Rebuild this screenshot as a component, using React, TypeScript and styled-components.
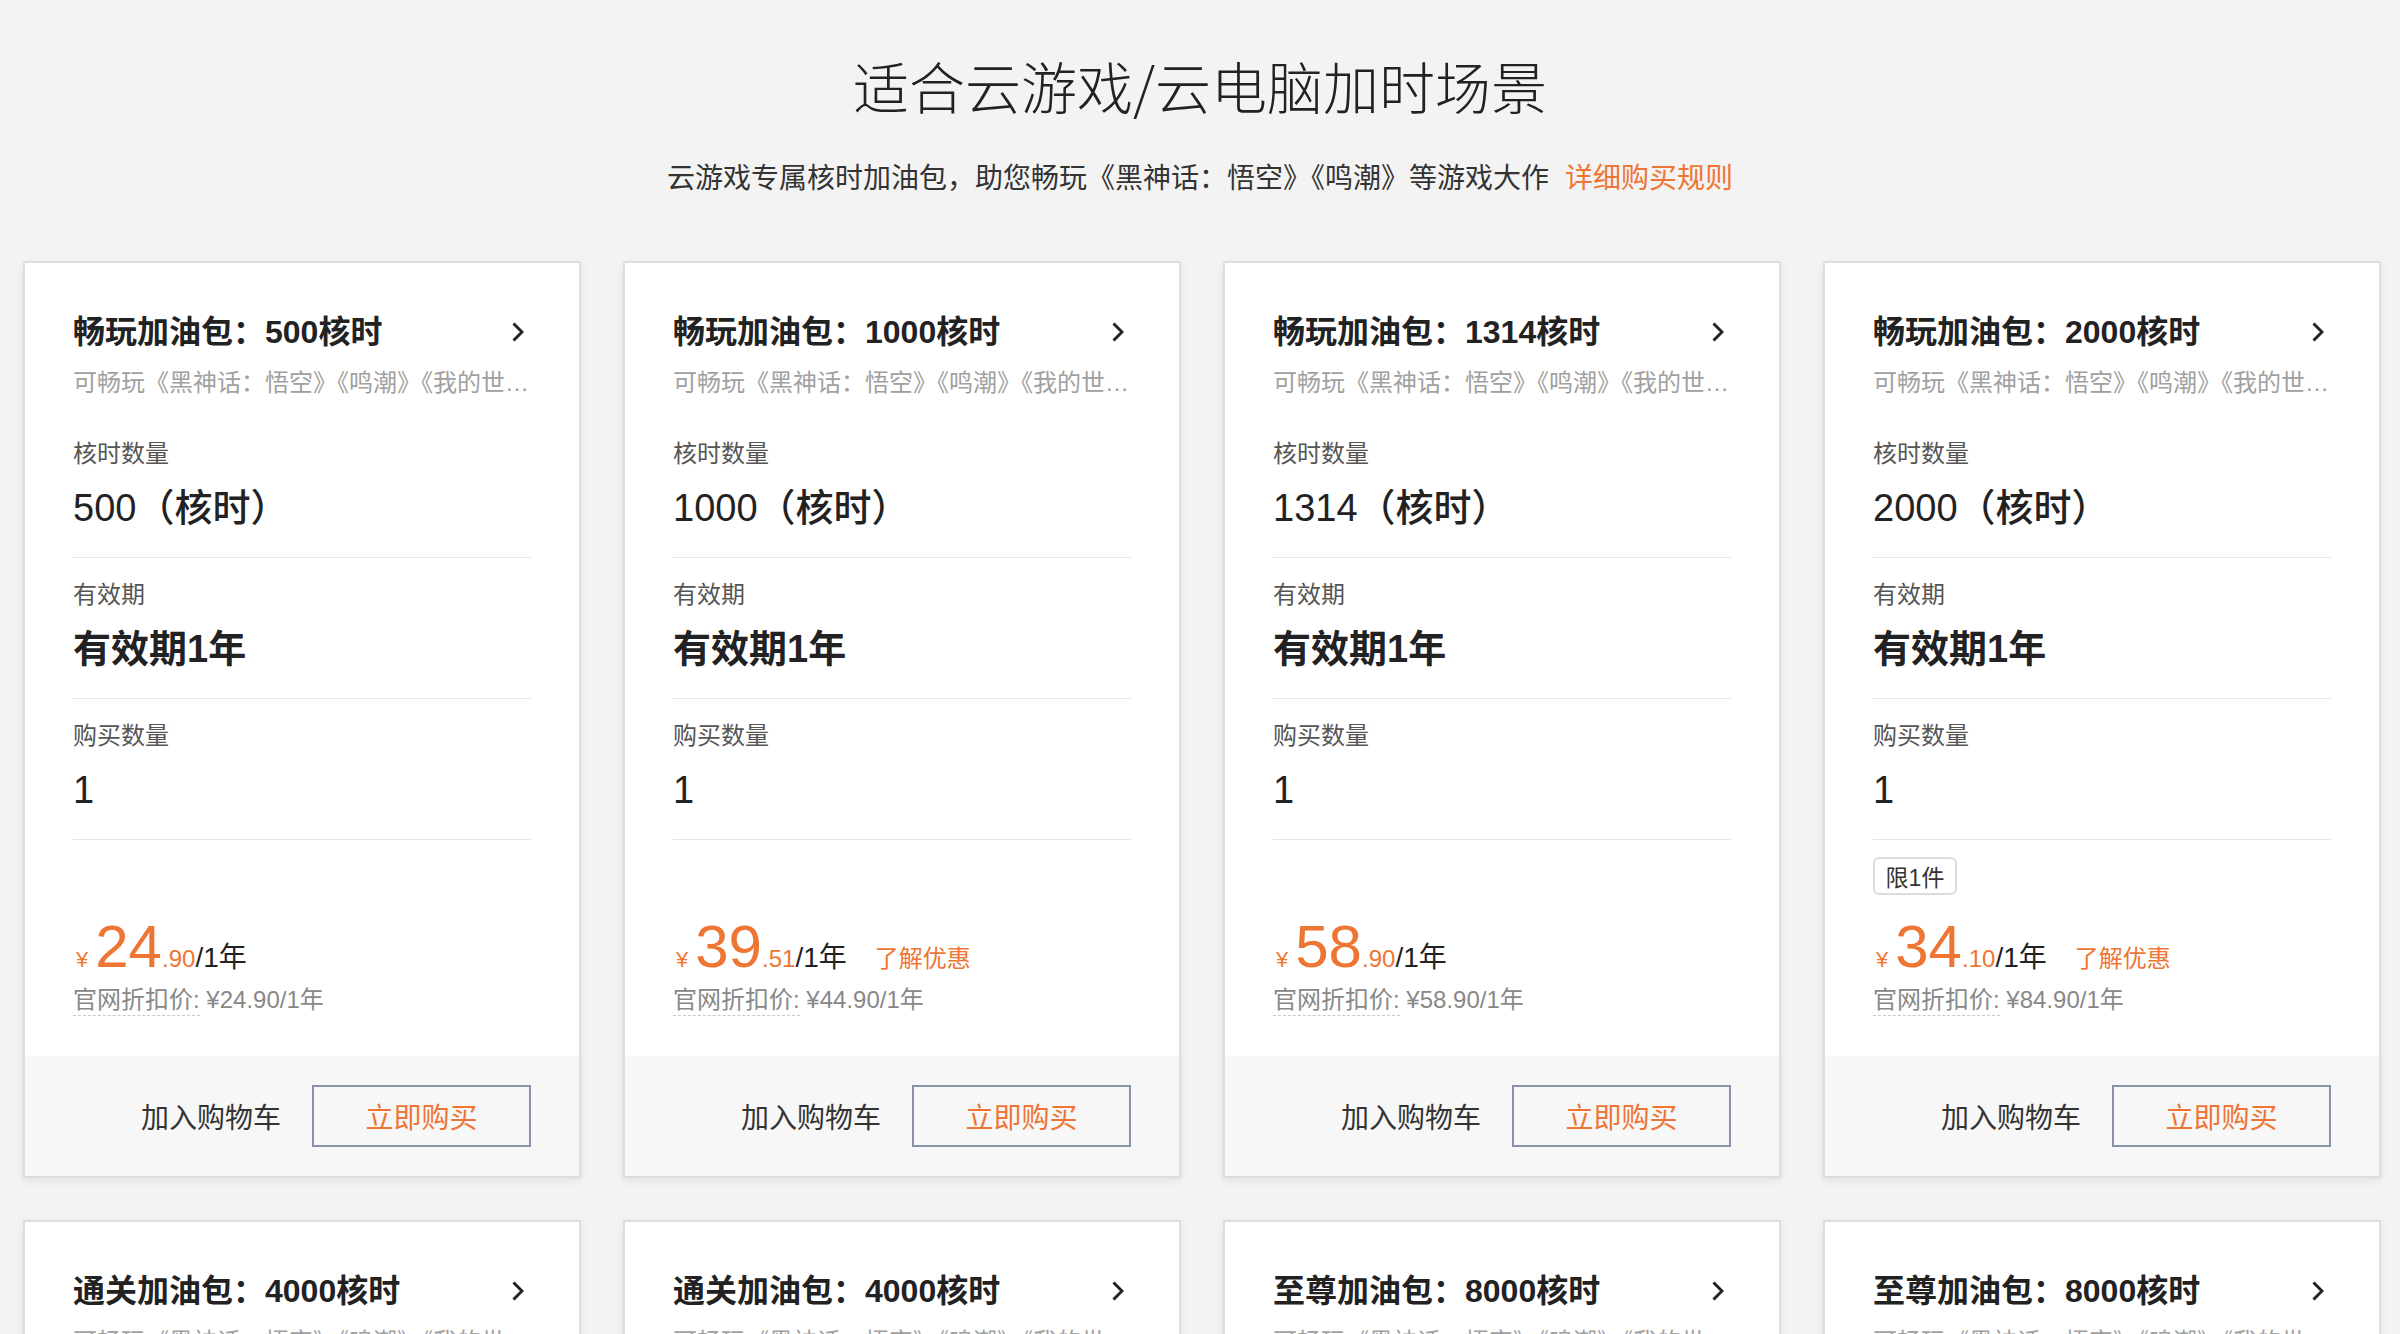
import React from 'react';
import styled, { createGlobalStyle } from 'styled-components';

const ORANGE = '#ee7533';

const GlobalStyle = createGlobalStyle`
  html, body {
    margin: 0;
    padding: 0;
    background: #f3f3f3;
  }
  body {
    font-family: "Liberation Sans", "Noto Sans CJK SC", sans-serif;
    color: #222;
  }
  * { box-sizing: border-box; }
`;

interface Pack {
  title: string;
  hours: string;
  int: string;
  dec: string;
  list: string;
  promo?: boolean;
  limit?: boolean;
}

const packs: Pack[] = [
  { title: '畅玩加油包：500核时', hours: '500', int: '24', dec: '.90', list: '¥24.90/1年' },
  { title: '畅玩加油包：1000核时', hours: '1000', int: '39', dec: '.51', list: '¥44.90/1年', promo: true },
  { title: '畅玩加油包：1314核时', hours: '1314', int: '58', dec: '.90', list: '¥58.90/1年' },
  { title: '畅玩加油包：2000核时', hours: '2000', int: '34', dec: '.10', list: '¥84.90/1年', promo: true, limit: true },
  { title: '通关加油包：4000核时', hours: '4000', int: '69', dec: '.90', list: '¥69.90/1年' },
  { title: '通关加油包：4000核时', hours: '4000', int: '59', dec: '.90', list: '¥69.90/1年', promo: true },
  { title: '至尊加油包：8000核时', hours: '8000', int: '119', dec: '.90', list: '¥119.90/1年' },
  { title: '至尊加油包：8000核时', hours: '8000', int: '99', dec: '.90', list: '¥119.90/1年', promo: true },
];

export default function App() {
  return (
    <>
      <GlobalStyle />
      <Page>
        <Header>
          <Title>适合云游戏/云电脑加时场景</Title>
          <Subtitle>
            云游戏专属核时加油包，助您畅玩《黑神话：悟空》《鸣潮》等游戏大作
            <RuleLink>详细购买规则</RuleLink>
          </Subtitle>
        </Header>
        <Grid>
          {packs.map((p, i) => (
            <Card key={i}>
              <Body>
                <CardHead>
                  <CardTitle>{p.title}</CardTitle>
                  <Chevron width="12" height="20" viewBox="0 0 12 20">
                    <polyline points="1.5,1.5 10,10 1.5,18.5" fill="none" stroke="#222" strokeWidth="3" />
                  </Chevron>
                </CardHead>
                <Desc>可畅玩《黑神话：悟空》《鸣潮》《我的世…</Desc>
                <Section>
                  <Label>核时数量</Label>
                  <Value>{p.hours}（核时）</Value>
                </Section>
                <Section>
                  <Label>有效期</Label>
                  <Value $bold>有效期1年</Value>
                </Section>
                <Section>
                  <Label>购买数量</Label>
                  <Value>1</Value>
                </Section>
                <PriceArea>
                  {p.limit && <LimitTag>限1件</LimitTag>}
                  <PriceRow>
                    <Yen>¥</Yen>
                    <PriceInt>{p.int}</PriceInt>
                    <PriceDec>{p.dec}</PriceDec>
                    <Per>/1年</Per>
                    {p.promo && <Promo>了解优惠</Promo>}
                  </PriceRow>
                  <ListPrice>
                    <Dashed>官网折扣价:</Dashed> {p.list}
                  </ListPrice>
                </PriceArea>
              </Body>
              <Footer>
                <CartButton>加入购物车</CartButton>
                <BuyButton>立即购买</BuyButton>
              </Footer>
            </Card>
          ))}
        </Grid>
      </Page>
    </>
  );
}

const Page = styled.div`
  width: 2400px;
  padding-bottom: 60px;
`;

const Header = styled.header`
  padding-top: 51px;
  text-align: center;
`;

const Title = styled.h1`
  margin: 0;
  font-family: "Noto Sans CJK SC", sans-serif;
  font-size: 56px;
  line-height: 68px;
  font-weight: 300;
  color: #222;
`;

const Subtitle = styled.p`
  margin: 40px 0 0;
  font-size: 28px;
  line-height: 40px;
  color: #333;
`;

const RuleLink = styled.a`
  margin-left: 16px;
  color: ${ORANGE};
  cursor: pointer;
`;

const Grid = styled.div`
  display: grid;
  grid-template-columns: repeat(4, 1fr);
  gap: 42px;
  padding: 0 19px 0 23px;
  margin-top: 62px;
`;

const Card = styled.div`
  background: #fff;
  border: 2px solid #dcdde2;
  box-shadow: 0 3px 8px rgba(0, 0, 0, 0.08);
  display: flex;
  flex-direction: column;
`;

const Body = styled.div`
  padding: 47px 48px 0;
`;

const CardHead = styled.div`
  display: flex;
  align-items: center;
  justify-content: space-between;
`;

const CardTitle = styled.div`
  font-size: 32px;
  line-height: 44px;
  font-weight: 700;
  color: #222;
`;

const Chevron = styled.svg`
  margin-right: 7px;
  flex: none;
`;

const Desc = styled.div`
  margin: 12px 0 17px;
  font-size: 24px;
  line-height: 34px;
  color: #a0a0a0;
  white-space: nowrap;
`;

const Section = styled.div`
  padding: 20px 0 24px;
  border-bottom: 1px solid #e7e7ea;
`;

const Label = styled.div`
  font-size: 24px;
  line-height: 34px;
  color: #555;
`;

const Value = styled.div<{ $bold?: boolean }>`
  margin-top: 12px;
  font-size: 38px;
  line-height: 50px;
  font-weight: ${(p) => (p.$bold ? 700 : 500)};
  color: #222;
`;

const PriceArea = styled.div`
  height: 216px;
  display: flex;
  flex-direction: column;
  justify-content: flex-end;
  align-items: flex-start;
  padding-bottom: 40px;
`;

const LimitTag = styled.span`
  display: inline-flex;
  align-items: center;
  justify-content: center;
  width: 84px;
  height: 38px;
  border: 2px solid #dcdcdc;
  border-radius: 6px;
  font-size: 23px;
  color: #333;
  margin-bottom: 22px;
`;

const PriceRow = styled.div`
  display: flex;
  align-items: baseline;
  line-height: 1;
`;

const Yen = styled.span`
  font-size: 22px;
  color: ${ORANGE};
  margin: 0 7px 0 3px;
`;

const PriceInt = styled.span`
  font-size: 60px;
  color: ${ORANGE};
`;

const PriceDec = styled.span`
  font-size: 24px;
  color: ${ORANGE};
`;

const Per = styled.span`
  font-size: 28px;
  color: #222;
`;

const Promo = styled.span`
  margin-left: 28px;
  font-size: 24px;
  color: ${ORANGE};
  cursor: pointer;
`;

const ListPrice = styled.div`
  margin-top: 8px;
  font-size: 24px;
  line-height: 30px;
  color: #888;
`;

const Dashed = styled.span`
  display: inline-block;
  border-bottom: 1px dashed #c8c8c8;
`;

const Footer = styled.div`
  height: 120px;
  background: #f7f7f7;
  display: flex;
  align-items: center;
  justify-content: flex-end;
  gap: 31px;
  padding: 0 48px;
`;

const CartButton = styled.button`
  border: none;
  background: none;
  padding: 0;
  font-family: inherit;
  font-size: 28px;
  color: #333;
  cursor: pointer;
`;

const BuyButton = styled.button`
  width: 219px;
  height: 62px;
  border: 2px solid #8892aa;
  background: transparent;
  font-family: inherit;
  font-size: 28px;
  color: ${ORANGE};
  cursor: pointer;
`;
